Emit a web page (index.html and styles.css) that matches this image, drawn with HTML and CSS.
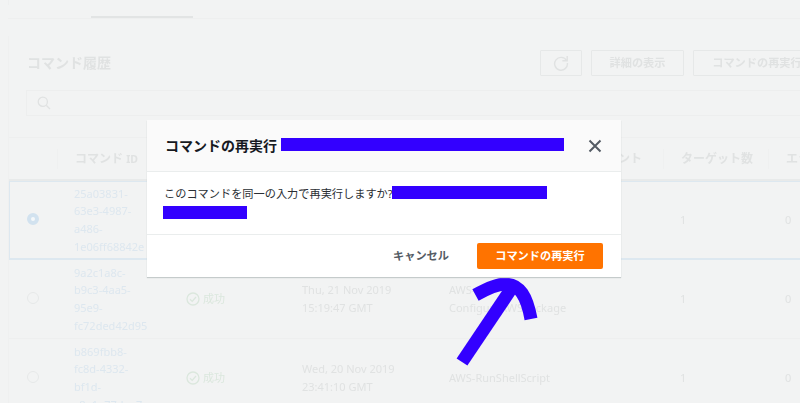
FILE: index.html
```html
<!DOCTYPE html>
<html lang="ja">
<head>
<meta charset="utf-8">
<title>コマンド履歴</title>
<link rel="stylesheet" href="styles.css">
</head>
<body>
<div class="page">
  <div class="tabs"><span class="tab-gap"></span><span class="tab-active"></span></div>
  <section class="panel">
    <header class="panel-head">
      <h2>コマンド履歴</h2>
      <div class="actions">
        <button class="btn icon-btn"><svg width="16" height="16" viewBox="0 0 16 16"><path d="M13.6 5.6A6.4 6.4 0 1 0 14.4 8" fill="none" stroke="currentColor" stroke-width="1.4"/><path d="M14.2 1V5.8H9.4" fill="none" stroke="currentColor" stroke-width="1.4"/></svg></button>
        <button class="btn detail">詳細の表示</button>
        <button class="btn rerun">コマンドの再実行</button>
      </div>
    </header>
    <div class="search"><svg width="14" height="14" viewBox="0 0 14 14"><circle cx="5.8" cy="5.8" r="4.6" fill="none" stroke="currentColor" stroke-width="1.3"/><path d="M9.2 9.2L13 13" stroke="currentColor" stroke-width="1.3"/></svg></div>
    <div class="grid head-row">
      <div></div><div class="th">コマンド <span class="latin">ID</span></div><div class="th"></div><div class="th"></div><div class="th th-doc">ント</div><div class="th">ターゲット数</div><div class="th">エラー</div>
    </div>
    <div class="grid row selected">
      <div class="radio-cell"><span class="radio on"></span></div>
      <div class="cell link">25a03831-<br>63e3-4987-<br>a486-<br>1e06ff68842e</div>
      <div class="cell"></div><div class="cell"></div><div class="cell"></div>
      <div class="cell">1</div><div class="cell">0</div>
    </div>
    <div class="grid row">
      <div class="radio-cell"><span class="radio"></span></div>
      <div class="cell link">9a2c1a8c-<br>b9c3-4aa5-<br>95e9-<br>fc72ded42d95</div>
      <div class="cell status"><svg width="14" height="14" viewBox="0 0 14 14"><circle cx="7" cy="7" r="6" fill="none" stroke="currentColor" stroke-width="1.3"/><path d="M4 7.2l2.2 2.2L10 5" fill="none" stroke="currentColor" stroke-width="1.3"/></svg>成功</div>
      <div class="cell">Thu, 21 Nov 2019<br>15:19:47 GMT</div>
      <div class="cell">AWS-<br>ConfigureAWSPackage</div>
      <div class="cell">1</div><div class="cell">0</div>
    </div>
    <div class="grid row">
      <div class="radio-cell"><span class="radio"></span></div>
      <div class="cell link">b869fbb8-<br>fc8d-4332-<br>bf1d-<br>c8e1e77dee7c</div>
      <div class="cell status"><svg width="14" height="14" viewBox="0 0 14 14"><circle cx="7" cy="7" r="6" fill="none" stroke="currentColor" stroke-width="1.3"/><path d="M4 7.2l2.2 2.2L10 5" fill="none" stroke="currentColor" stroke-width="1.3"/></svg>成功</div>
      <div class="cell">Wed, 20 Nov 2019<br>23:41:10 GMT</div>
      <div class="cell">AWS-RunShellScript</div>
      <div class="cell">1</div><div class="cell">0</div>
    </div>
  </section>
</div>

<svg class="arrow" width="800" height="403" viewBox="0 0 800 403"><path d="M462 362L511 289" fill="none" stroke="#3300ff" stroke-width="13"/><path d="M475.500 295C490 287 498 284 505 284C520 284 527 297 531 319" fill="none" stroke="#3300ff" stroke-width="13"/></svg>

<div class="modal">
  <div class="modal-head">
    <div class="modal-title">コマンドの再実行<span class="redact title-redact"></span></div>
    <svg class="close" width="14" height="14" viewBox="0 0 14 14"><path d="M1.500 1.500L12.500 12.500M12.500 1.500L1.500 12.500" stroke="#545b64" stroke-width="2" fill="none"/></svg>
  </div>
  <div class="modal-body">
    <p>このコマンドを同一の入力で再実行しますか?<span class="redact body-redact"></span></p>
    <p><span class="redact line-redact"></span></p>
  </div>
  <div class="modal-foot">
    <button class="cancel">キャンセル</button>
    <button class="primary">コマンドの再実行</button>
  </div>
</div>
</body>
</html>
```
FILE: styles.css
```css
* { box-sizing: border-box; }
html, body { margin: 0; height: 403px; overflow: hidden; }
body { background: #f2f3f3; font-family: "Noto Sans", "Noto Sans CJK JP", sans-serif; color: #e2e4e4; position: relative; }
.page { width: 800px; height: 403px; overflow: hidden; filter: blur(0.5px); }
.tabs { height: 19px; margin-left: 8px; border-bottom: 1px solid #eeefef; display: flex; align-items: flex-end; }
.tab-gap { width: 82px; height: 19px; background: linear-gradient(#eeefef 6px, transparent 6px) no-repeat 0 0 / 1px 19px; }
.tab-active { width: 102px; height: 2px; background: #e2e4e4; margin-left: 1px; }
.panel { margin: 17px 0 0 8px; width: 813px; border-left: 1px solid #eff0f0; }
.panel-head { height: 54px; display: flex; align-items: flex-start; justify-content: space-between; padding: 14px 0 0 18px; }
h2 { margin: 3px 0 0; font-size: 14px; line-height: 20px; font-weight: 700; color: #e0e2e2; }
.actions { display: flex; gap: 9px; }
.btn { height: 26px; border: 1px solid #e6e8e8; background: transparent; font: 700 11.2px/1 "Noto Sans", "Noto Sans CJK JP", sans-serif; color: #e0e2e2; padding: 0; border-radius: 1px; display: flex; align-items: center; justify-content: center; }
.icon-btn { width: 42px; }
.detail { width: 93px; }
.rerun { width: 128px; }
.search { margin-left: 17px; height: 26px; border: 1px solid #edeeee; display: flex; align-items: center; padding-left: 10px; color: #e0e2e2; }
.grid { display: grid; grid-template-columns: 48px 112px 116px 147px 231px 105px 1fr; }
.head-row { height: 44px; margin-top: 21px; border-top: 1px solid #eeefef; border-bottom: 2px solid #e8eaea; align-items: center; }
.th { font-size: 12px; font-weight: 700; color: #e0e2e2; padding-left: 17px; line-height: 20px; height: 20px; border-left: 1px solid #eff0f0; white-space: nowrap; }
.latin { font-size: 10.5px; }
.th-doc { text-align: right; padding-right: 21px; }
.row { height: 79px; border-bottom: 1px solid #eeefef; font-size: 11px; line-height: 17.7px; color: #e0e2e2; align-items: center; }
.row.selected { box-shadow: inset 0 0 0 1px #dde8f0; border-bottom-color: #dde8f0; }
.cell { padding-left: 17px; white-space: nowrap; }
.radio-cell { padding-left: 17.500px; display: flex; margin-top: -3px; }
.radio { width: 12px; height: 12px; border: 1px solid #e6e8e8; border-radius: 50%; }
.radio.on { border: 4px solid #d2e2ef; background: #f5f8fa; }
.link { color: #dde7ef; }
.status { color: #dbe7dd; display: flex; align-items: center; gap: 3px; }
.arrow { position: absolute; left: 0; top: 0; }
.modal { position: absolute; left: 147px; top: 120px; width: 474px; height: 157px; background: #fff; box-shadow: 0 1px 1px #c5cbcb; display: flex; flex-direction: column; }
.modal-head { height: 52px; background: #fafafa; border-bottom: 1px solid #eaeded; display: flex; align-items: center; padding: 0 19px 0 18px; justify-content: space-between; }
.modal-title { font-size: 14px; font-weight: 700; color: #16191f; line-height: 20px; display: flex; align-items: center; white-space: nowrap; }
.redact { display: inline-block; background: #3300ff; height: 13px; }
.title-redact { width: 283px; margin-left: 4px; margin-top: -2px; }
.body-redact { width: 155px; margin-left: -1px; vertical-align: -1px; }
.line-redact { width: 84px; margin-left: -1px; vertical-align: -1px; }
.modal-body { height: 62px; padding: 12px 17px 0; font-size: 11.200px; color: #2a2e33; }
.modal-body p { margin: 0; line-height: 20px; height: 20px; white-space: nowrap; }
.modal-foot { flex: 1; border-top: 1px solid #eaeded; display: flex; align-items: center; justify-content: flex-end; padding: 0 18px 1px 0; gap: 28px; }
.cancel { border: 0; background: none; padding: 0; font: 700 11.200px/1 "Noto Sans", "Noto Sans CJK JP", sans-serif; color: #545b64; }
.primary { width: 126px; height: 26px; border: 0; border-radius: 2px; background: #ff7300; color: #fff; padding: 0; font: 700 11.200px/1 "Noto Sans", "Noto Sans CJK JP", sans-serif; }
```
